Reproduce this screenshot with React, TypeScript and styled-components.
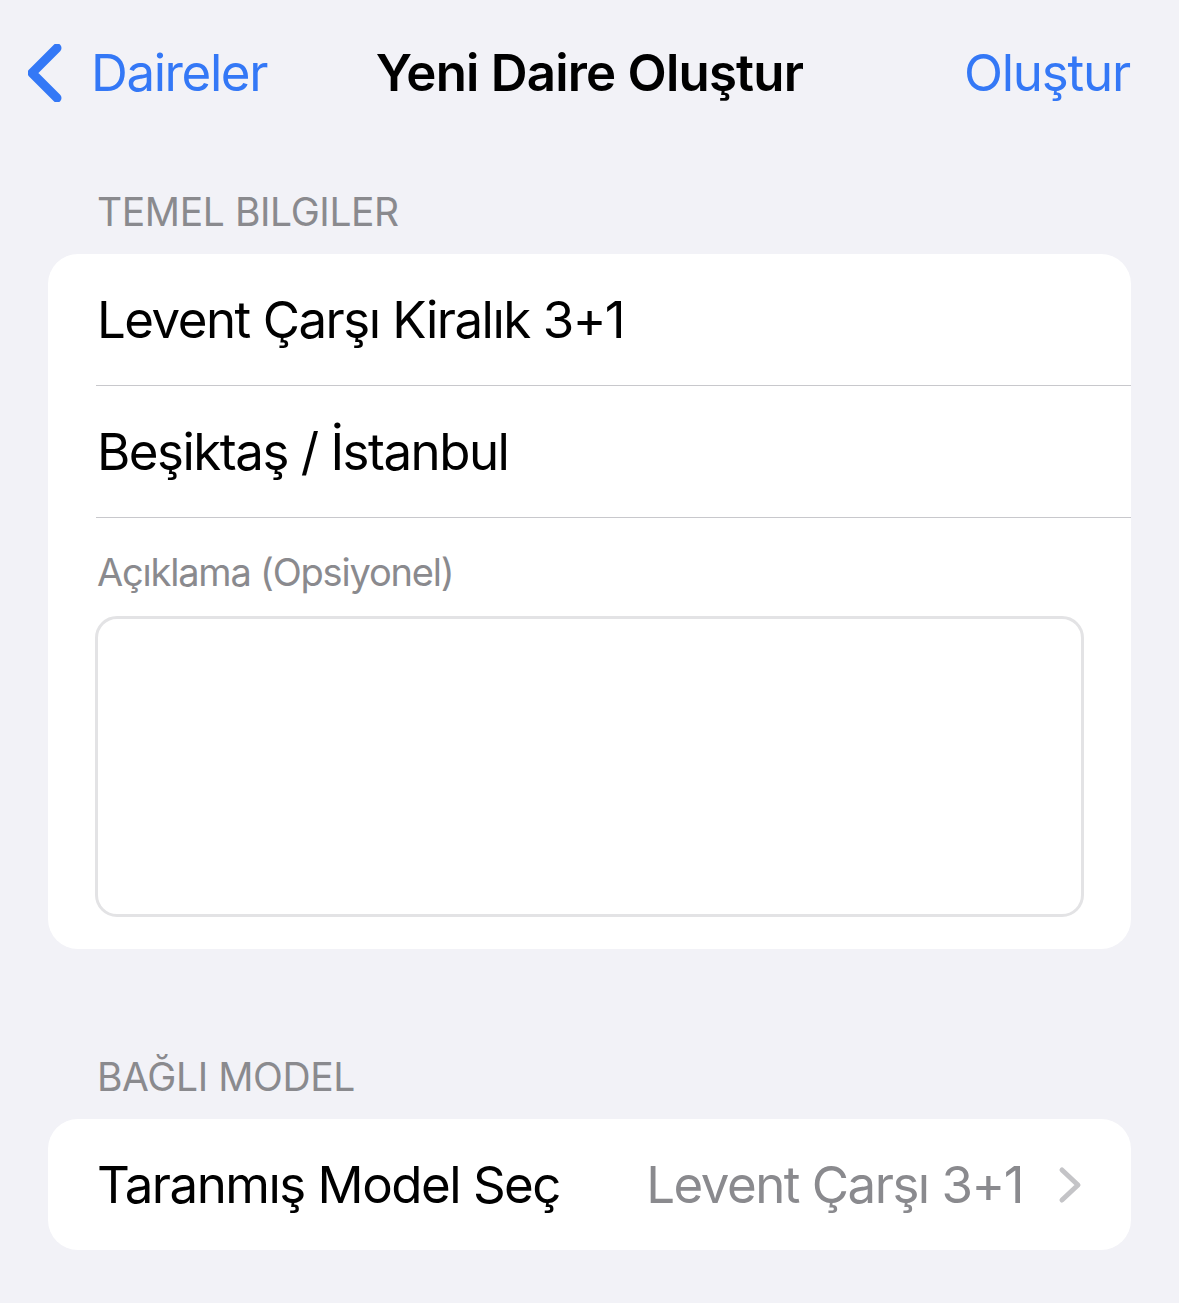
import React from "react";
import styled, { createGlobalStyle } from "styled-components";

const GlobalStyle = createGlobalStyle`
  html, body {
    margin: 0;
    padding: 0;
    background: #f2f2f7;
  }
  body {
    font-family: Inter, "Noto Sans", "Liberation Sans", sans-serif;
    -webkit-font-smoothing: antialiased;
  }
`;

const Page = styled.div`
  min-height: 1303px;
  background: #f2f2f7;
  display: flex;
  flex-direction: column;
`;

const NavBar = styled.header`
  display: grid;
  grid-template-columns: 1fr auto 1fr;
  align-items: center;
  height: 60px;
  margin-top: 42px;
  padding: 0 28px;
`;

const BackButton = styled.button`
  justify-self: start;
  display: flex;
  align-items: center;
  gap: 27px;
  background: none;
  border: none;
  padding: 0;
  color: #3478f6;
  font-family: inherit;
  font-size: 51px;
  letter-spacing: -1.4px;
  cursor: pointer;
`;

const Title = styled.h1`
  margin: 0;
  font-size: 51px;
  font-weight: 600;
  letter-spacing: -0.8px;
  color: #000;
`;

const ActionButton = styled.button`
  justify-self: end;
  background: none;
  border: none;
  padding: 0 21px 0 0;
  color: #3478f6;
  font-family: inherit;
  font-size: 51px;
  letter-spacing: -1.2px;
  cursor: pointer;
`;

const Section = styled.section<{ $top: number }>`
  margin: ${(p) => p.$top}px 48px 0;
`;

const SectionHeader = styled.div`
  padding-left: 49px;
  font-size: 39px;
  letter-spacing: -0.4px;
  color: #8a8a8e;
  line-height: 48px;
  margin-bottom: 18px;
`;

const Card = styled.div`
  background: #fff;
  border-radius: 30px;
  overflow: hidden;
`;

const Row = styled.div<{ $divider?: boolean }>`
  display: flex;
  align-items: center;
  height: 131px;
  margin-left: 48px;
  padding-right: 49px;
  border-bottom: ${(p) => (p.$divider ? "1px solid #c8c8cc" : "none")};
  font-size: 51px;
  letter-spacing: -1.5px;
  color: #000;
`;

const RowLabel = styled.span`
  flex: 1;
  padding-left: 1px;
`;

const RowValue = styled.span`
  color: #8a8a8e;
`;

const Chevron = styled.svg`
  margin-left: 35px;
  flex: none;
`;

const NoteBlock = styled.div`
  padding: 30px 47px 32px 47px;
`;

const NoteLabel = styled.div`
  font-size: 38px;
  letter-spacing: -1.2px;
  color: #8a8a8e;
  line-height: 48px;
  padding-left: 2px;
  margin-bottom: 20px;
`;

const TextArea = styled.div`
  height: 295px;
  border: 3px solid #e3e3e5;
  border-radius: 22px;
  background: #fff;
`;

export default function App() {
  return (
    <Page>
      <GlobalStyle />
      <NavBar>
        <BackButton>
          <svg width="36" height="58" viewBox="0 0 36 58">
            <polyline
              points="29,4 4,29 29,54"
              fill="none"
              stroke="#3478f6"
              strokeWidth="9"
              strokeLinecap="round"
              strokeLinejoin="round"
            />
          </svg>
          Daireler
        </BackButton>
        <Title>Yeni Daire Oluştur</Title>
        <ActionButton>Oluştur</ActionButton>
      </NavBar>

      <Section $top={86}>
        <SectionHeader>TEMEL BILGILER</SectionHeader>
        <Card>
          <Row $divider>
            <RowLabel>Levent Çarşı Kiralık 3+1</RowLabel>
          </Row>
          <Row $divider>
            <RowLabel>Beşiktaş / İstanbul</RowLabel>
          </Row>
          <NoteBlock>
            <NoteLabel>Açıklama (Opsiyonel)</NoteLabel>
            <TextArea />
          </NoteBlock>
        </Card>
      </Section>

      <Section $top={104}>
        <SectionHeader>BAĞLI MODEL</SectionHeader>
        <Card>
          <Row>
            <RowLabel>Taranmış Model Seç</RowLabel>
            <RowValue>Levent Çarşı 3+1</RowValue>
            <Chevron width="24" height="38" viewBox="0 0 24 38">
              <polyline
                points="4,4 20,19 4,34"
                fill="none"
                stroke="#c4c4c7"
                strokeWidth="5"
                strokeLinecap="round"
                strokeLinejoin="round"
              />
            </Chevron>
          </Row>
        </Card>
      </Section>
    </Page>
  );
}
